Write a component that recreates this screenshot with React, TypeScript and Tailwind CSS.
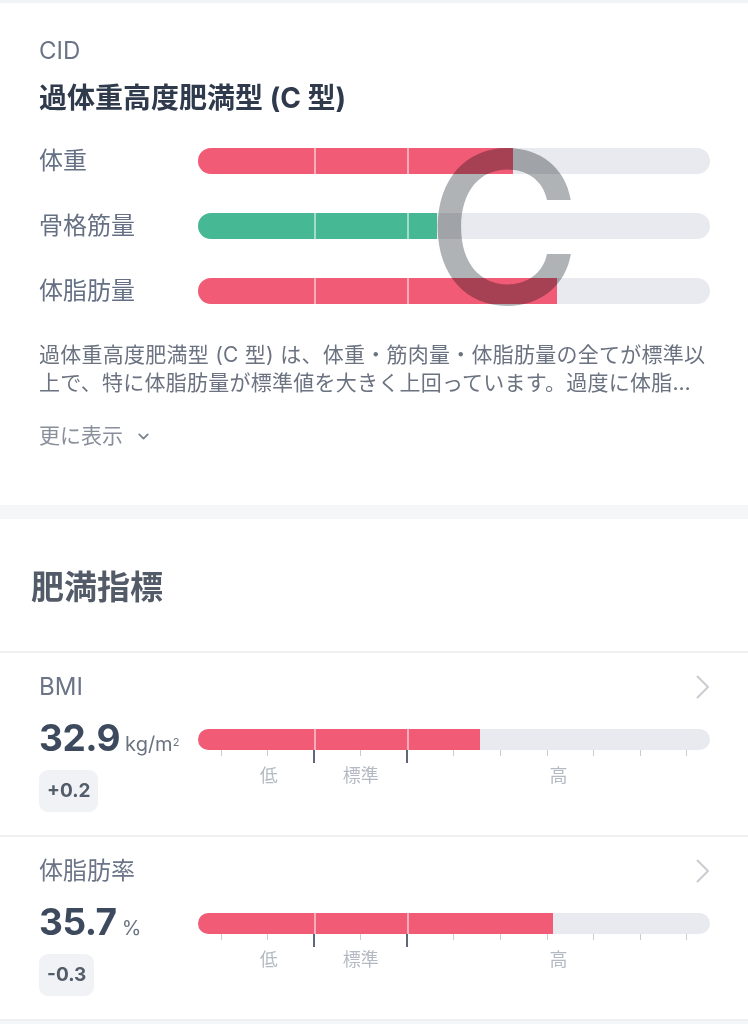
import React from 'react';
import { ChevronDown } from 'lucide-react';

const RED = 'bg-[#f15b75]';
const GREEN = 'bg-[#46b894]';

// 11 目盛り、3番目と5番目が区切り
const TICKS = Array.from({ length: 11 }, (_, i) => i);

const Bar = ({ fill, color, height }: { fill: number; color: string; height: string }) => (
  <div className={`relative w-full overflow-hidden rounded-full bg-[#e8eaef] ${height}`}>
    <div className={`h-full ${color}`} style={{ width: `${fill}%` }} />
    <div className="absolute inset-y-0 left-[22.7%] w-[2px] bg-white/50" />
    <div className="absolute inset-y-0 left-[40.8%] w-[2px] bg-white/50" />
  </div>
);

const CidRow = ({ label, fill, color }: { label: string; fill: number; color: string }) => (
  <div className="flex h-[26px] items-center">
    <div className="w-[159px] shrink-0 text-[24px] leading-none text-[#667085]">{label}</div>
    <Bar fill={fill} color={color} height="h-[26px]" />
  </div>
);

const Scale = () => (
  <div>
    <div className="grid h-[13px] grid-cols-11">
      {TICKS.map((i) => (
        <div key={i} className="flex justify-center">
          {i === 2 || i === 4 ? (
            <div className="h-[13px] w-[2px] bg-[#5d6878]" />
          ) : (
            <div className="h-[6px] w-px bg-[#c9ced6]" />
          )}
        </div>
      ))}
    </div>
    <div className="relative h-[26px] text-[18px] leading-[26px] text-[#b4bac3]">
      <span className="absolute left-[13.8%] -translate-x-1/2">低</span>
      <span className="absolute left-[31.8%] -translate-x-1/2">標準</span>
      <span className="absolute left-[70.4%] -translate-x-1/2">高</span>
    </div>
  </div>
);

const Chevron = () => (
  <svg width="16" height="26" viewBox="0 0 16 26" fill="none" className="mr-[-1px]">
    <path d="M2.5 2.5 L13 13 L2.5 23.5" stroke="#c9cdd2" strokeWidth="2" strokeLinecap="round" strokeLinejoin="round" />
  </svg>
);

const IndexItem = ({
  label,
  value,
  unit,
  diff,
  fill,
}: {
  label: string;
  value: string;
  unit: React.ReactNode;
  diff: string;
  fill: number;
}) => (
  <div className="border-b-2 border-[#eef0f2] pl-[39px] pr-[38px] pt-[18px] pb-[23px]">
    <div className="flex h-[32px] items-center justify-between">
      <span className="text-[24px] leading-none text-[#6b7587]">{label}</span>
      <Chevron />
    </div>
    <div className="mt-[15px] flex">
      <div className="w-[159px] shrink-0">
        <div className="flex h-[40px] items-baseline gap-[5px]">
          <span className="text-[37px] font-bold leading-[40px] tracking-[-0.5px] text-[#3d4a5e]">{value}</span>
          <span className="text-[20px] text-[#6b7380]">{unit}</span>
        </div>
        <div className="mt-[12px] inline-flex h-[42px] items-center rounded-[9px] bg-[#f0f2f5] px-[8px] text-[19px] font-bold text-[#535d69]">
          {diff}
        </div>
      </div>
      <div className="min-w-0 flex-1 pt-[11px]">
        <Bar fill={fill} color={RED} height="h-[21px]" />
        <Scale />
      </div>
    </div>
  </div>
);

export default function App() {
  return (
    <div className="min-h-screen bg-white font-['Inter','Noto_Sans_CJK_JP',sans-serif]">
      <div className="h-[3px] bg-[#f1f3f5]" />

      {/* CID */}
      <section className="pl-[39px] pr-[38px] pt-[32px] pb-[55px]">
        <div className="text-[24px] leading-[32px] text-[#6b7486]">CID</div>
        <h2 className="mt-[13px] text-[28px] font-bold leading-[36px] text-[#2f3a4c]">過体重高度肥満型 (C 型)</h2>

        <div className="relative mt-[32px] flex flex-col gap-[39px]">
          <CidRow label="体重" fill={61.5} color={RED} />
          <CidRow label="骨格筋量" fill={46.7} color={GREEN} />
          <CidRow label="体脂肪量" fill={70.1} color={RED} />
          <div className="pointer-events-none absolute left-[387px] top-[-27px] font-['Inter',sans-serif] text-[212px] font-medium leading-none text-[#b0b3b5] mix-blend-multiply">
            C
          </div>
        </div>

        <p className="mt-[37px] line-clamp-2 text-[21px] leading-[28px] tracking-[0.25px] text-[#6b7280]">
          過体重高度肥満型 (C 型) は、体重・筋肉量・体脂肪量の全てが標準以上で、特に体脂肪量が標準値を大きく上回っています。過度に体脂肪が蓄積しているため、食事と運動の見直しをおすすめします。
        </p>

        <button className="mt-[25px] flex h-[28px] items-center gap-[12px] text-[21px] text-[#89909b]">
          更に表示
          <ChevronDown size={17} strokeWidth={2.6} className="text-[#7d8590]" />
        </button>
      </section>

      <div className="h-[14px] bg-[#f4f7f8]" />

      {/* 肥満指標 */}
      <section>
        <h2 className="border-b-2 border-[#eef0f2] px-[31px] pt-[48px] pb-[44px] text-[33px] font-bold leading-[40px] text-[#525b67]">
          肥満指標
        </h2>
        <IndexItem
          label="BMI"
          value="32.9"
          unit={
            <>
              kg/m<sup className="text-[11px]">2</sup>
            </>
          }
          diff="+0.2"
          fill={55.1}
        />
        <IndexItem label="体脂肪率" value="35.7" unit="%" diff="-0.3" fill={69.3} />
      </section>

      <div className="h-[14px] bg-[#f4f7f8]" />
    </div>
  );
}
